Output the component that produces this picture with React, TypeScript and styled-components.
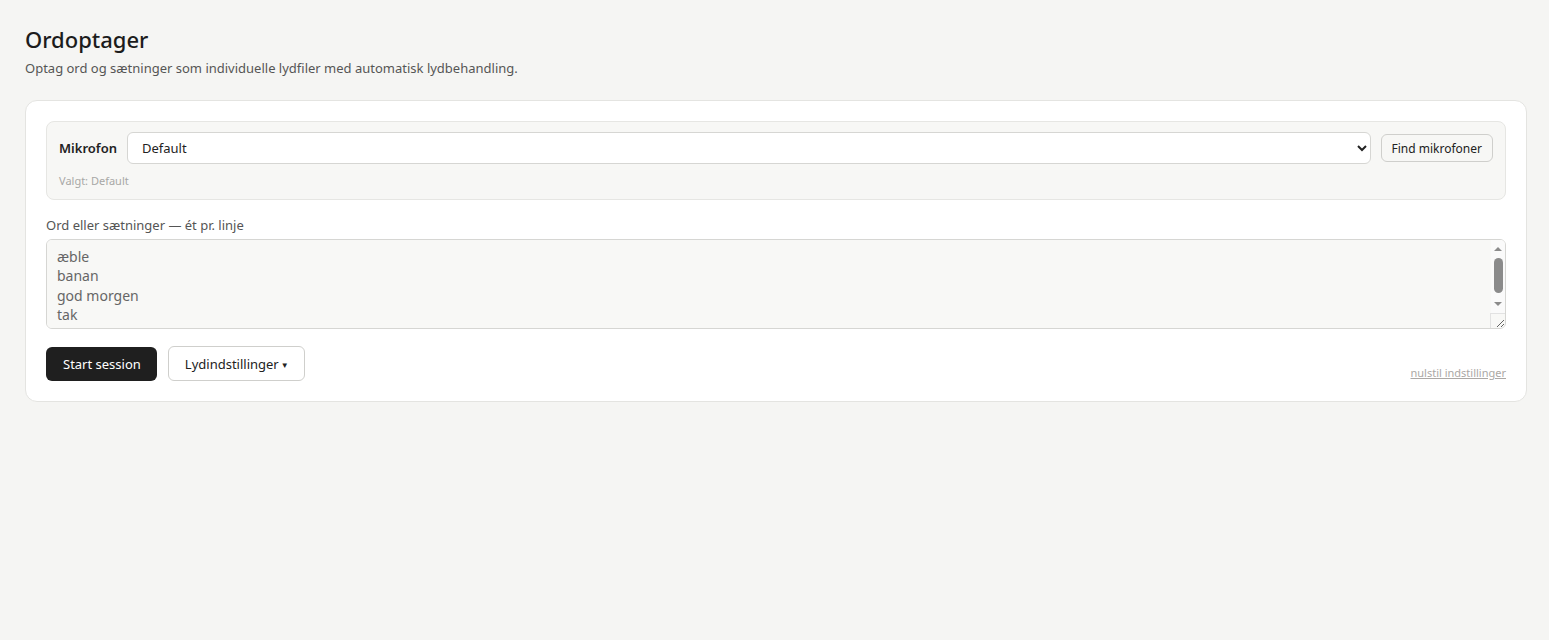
import React from "react";
import styled, { createGlobalStyle } from "styled-components";

const Global = createGlobalStyle`
  html, body { margin: 0; padding: 0; background: #f5f5f3; }
  body { font-family: "Noto Sans", "Open Sans", sans-serif; color: #1f1f1f; }
  * { box-sizing: border-box; }
`;

const Page = styled.div`
  padding: 24px 22px 24px 25px;
`;

const Title = styled.h1`
  margin: 0;
  font-size: 22px;
  font-weight: 500;
  line-height: 30px;
  color: #1c1c1c;
`;

const Subtitle = styled.p`
  margin: 5px 0 0;
  font-size: 13px;
  line-height: 18px;
  color: #555;
`;

const Card = styled.section`
  margin-top: 23px;
  background: #fff;
  border: 1px solid #e4e4e1;
  border-radius: 12px;
  padding: 20px;
`;

const MicPanel = styled.div`
  background: #f7f7f5;
  border: 1px solid #e6e6e3;
  border-radius: 8px;
  padding: 10px 12px 10px 12px;
`;

const MicRow = styled.div`
  display: flex;
  align-items: center;
  gap: 10px;
`;

const MicLabel = styled.label`
  font-size: 13px;
  font-weight: 600;
  color: #222;
`;

const Select = styled.select`
  flex: 1;
  height: 32px;
  border: 1px solid #d6d6d3;
  border-radius: 6px;
  background: #fff;
  padding: 0 8px 0 10px;
  font-family: inherit;
  font-size: 13px;
  color: #222;
`;

const SmallButton = styled.button`
  height: 28px;
  padding: 0 10px;
  border: 1px solid #cfcfcc;
  border-radius: 6px;
  background: #f7f7f5;
  font-family: inherit;
  font-size: 12px;
  color: #222;
`;

const Chosen = styled.div`
  margin-top: 9px;
  font-size: 11px;
  color: #a8a8a6;
  line-height: 16px;
`;

const FieldLabel = styled.div`
  margin-top: 16px;
  font-size: 13px;
  color: #555;
  line-height: 18px;
`;

const TextWrap = styled.div`
  position: relative;
  margin-top: 5px;
`;

const TextArea = styled.textarea`
  display: block;
  width: 100%;
  height: 90px;
  border: 1px solid #d6d6d3;
  border-radius: 6px;
  background: #f8f8f6;
  padding: 7px 24px 7px 10px;
  font-family: inherit;
  font-size: 14px;
  line-height: 19.3px;
  color: #666;
  resize: vertical;
`;

const ScrollTrack = styled.div`
  position: absolute;
  top: 1px;
  right: 1px;
  bottom: 16px;
  width: 14px;
  background: #fafafa;
  border-top-right-radius: 5px;
  display: flex;
  flex-direction: column;
  align-items: center;
  padding-top: 7px;
  pointer-events: none;
`;

const Arrow = styled.div<{ $down?: boolean }>`
  width: 0;
  height: 0;
  border-left: 4px solid transparent;
  border-right: 4px solid transparent;
  ${(p) => (p.$down ? "border-top: 4px solid #8b8b8b;" : "border-bottom: 4px solid #8b8b8b;")}
`;

const Thumb = styled.div`
  width: 9px;
  height: 35px;
  margin: 7px 0 9px;
  border-radius: 5px;
  background: #8b8b8b;
`;

const ScrollCorner = styled.div`
  position: absolute;
  right: 1px;
  bottom: 1px;
  width: 15px;
  height: 15px;
  border-top: 1px solid #e2e2e2;
  border-left: 1px solid #e2e2e2;
  pointer-events: none;
`;

const Actions = styled.div`
  margin-top: 17px;
  display: flex;
  align-items: flex-end;
  gap: 11px;
`;

const PrimaryButton = styled.button`
  height: 34px;
  padding: 0 16px 0 17px;
  border: none;
  border-radius: 6px;
  background: #1f1f1f;
  color: #fff;
  font-family: inherit;
  font-size: 13px;
`;

const SecondaryButton = styled.button`
  height: 35px;
  padding: 0 15px 0 16px;
  border: 1px solid #cfcfcc;
  border-radius: 6px;
  background: #fff;
  color: #222;
  font-family: inherit;
  font-size: 13px;
`;

const Caret = styled.span`
  font-size: 8px;
  margin-left: 2px;
  position: relative;
  top: -1px;
`;

const ResetLink = styled.a`
  margin-left: auto;
  font-size: 11px;
  color: #aba8a5;
  text-decoration: underline;
  line-height: 14px;
  margin-bottom: 1px;
`;

export default function App() {
  return (
    <>
      <Global />
      <Page>
        <Title>Ordoptager</Title>
        <Subtitle>Optag ord og sætninger som individuelle lydfiler med automatisk lydbehandling.</Subtitle>
        <Card>
          <MicPanel>
            <MicRow>
              <MicLabel>Mikrofon</MicLabel>
              <Select defaultValue="default">
                <option value="default">Default</option>
              </Select>
              <SmallButton>Find mikrofoner</SmallButton>
            </MicRow>
            <Chosen>Valgt: Default</Chosen>
          </MicPanel>
          <FieldLabel>Ord eller sætninger — ét pr. linje</FieldLabel>
          <TextWrap>
            <TextArea defaultValue={"æble\nbanan\ngod morgen\ntak\nfarvel\nhej"} />
            <ScrollTrack>
              <Arrow />
              <Thumb />
              <Arrow $down />
            </ScrollTrack>
            <ScrollCorner />
          </TextWrap>
          <Actions>
            <PrimaryButton>Start session</PrimaryButton>
            <SecondaryButton>
              Lydindstillinger<Caret>▼</Caret>
            </SecondaryButton>
            <ResetLink href="#">nulstil indstillinger</ResetLink>
          </Actions>
        </Card>
      </Page>
    </>
  );
}
